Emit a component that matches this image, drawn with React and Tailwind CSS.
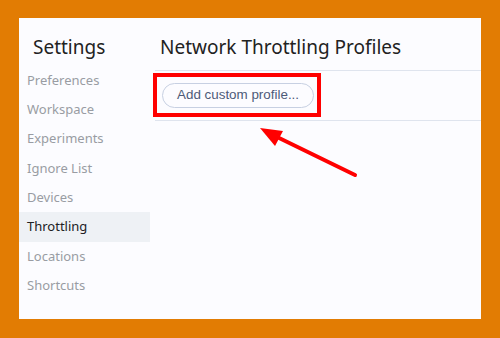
import React from 'react'

const items = ['Preferences', 'Workspace', 'Experiments', 'Ignore List', 'Devices', 'Throttling', 'Locations', 'Shortcuts']

const App = () => {
  return (
    <div className="w-[500px] h-[338px] bg-[#e27c03] pt-[18px] pl-[19px] pr-[19px] pb-[19px]" style={{ fontFamily: '"Noto Sans", "Open Sans", sans-serif' }}>
      <div className="relative flex h-full w-full bg-[#fcfcff]">
        {/* sidebar */}
        <div className="w-[131px] shrink-0 flex flex-col">
          <h1 className="pl-[14px] pt-[16px] h-[48px] text-[19px] leading-[26px] text-[#222]">Settings</h1>
          {items.map(item => (
            <div
              key={item}
              className={`h-[29.3px] pl-[8px] flex items-center text-[13px] ${item === 'Throttling' ? 'bg-[#eef1f5] text-[#202124]' : 'text-[#999ca3]'}`}
            >
              {item}
            </div>
          ))}
        </div>

        {/* main */}
        <div className="flex-1 flex flex-col pl-[5px]">
          <h2 className="pl-[5px] pt-[16px] h-[53px] text-[19px] leading-[26px] text-[#222] border-b border-[#dfe4ee]">
            Network Throttling Profiles
          </h2>
          <div className="h-[50px] flex items-center pl-[7px] border-b border-[#dfe4ee]">
            <button className="h-[25px] px-[14px] rounded-full border border-[#c7d0e2] text-[13.4px] text-[#4d5a78] bg-[#fcfcff]" style={{ fontFamily: '"Liberation Sans", Arial, sans-serif' }}>
              Add custom profile...
            </button>
          </div>
        </div>

        {/* highlight overlay */}
        <div className="absolute left-[134px] top-[55px] w-[168px] h-[44px] border-[4px] border-[#ff0000]" />
        <svg className="absolute left-0 top-0" width="462" height="301" viewBox="0 0 462 301">
          <line x1="336" y1="157" x2="256" y2="118" stroke="#ff0000" strokeWidth="4" strokeLinecap="round" />
          <polygon points="241,110 264,113 256,128" fill="#ff0000" />
        </svg>
      </div>
    </div>
  )
}

export default App
